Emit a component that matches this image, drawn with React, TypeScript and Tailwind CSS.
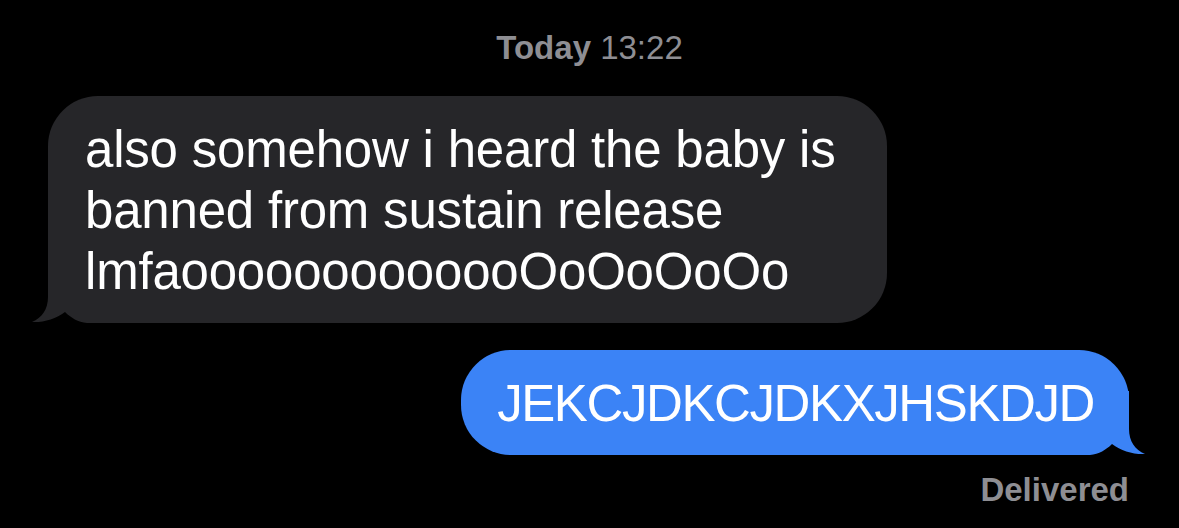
import React from "react";

function Tail({ side, color }: { side: "left" | "right"; color: string }) {
  // little hook at the bottom corner of a bubble
  const d =
    side === "left"
      ? "M16 0 L16 38 C16 50 10 59 0 63 C12 63.5 24 60 33 53 C39 59 46 63 55 64 L80 64 L80 0 Z"
      : "M64 0 L64 38 C64 50 70 59 80 63 C68 63.5 56 60 47 53 C41 59 34 63 25 64 L0 64 L0 0 Z";
  return (
    <svg
      width="80"
      height="64"
      viewBox="0 0 80 64"
      className={
        side === "left"
          ? "absolute bottom-0 -left-[16px]"
          : "absolute bottom-0 -right-[16px]"
      }
    >
      <path d={d} fill={color} />
    </svg>
  );
}

export default function App() {
  return (
    <div
      className="min-h-[528px] w-full bg-black text-white"
      style={{ fontFamily: "'Liberation Sans', Arial, sans-serif" }}
    >
      {/* Timestamp */}
      <div className="pt-[28px] text-center text-[33px] leading-[40px] text-[#8e8e93]">
        <span className="font-semibold">Today</span> 13:22
      </div>

      {/* Incoming message */}
      <div className="mt-[28px] pl-[48px]">
        <div className="relative w-[839px] rounded-[50px] bg-[#262629] pl-[37px] pr-[30px] pt-[23px] pb-[21px]">
          <Tail side="left" color="#262629" />
          <p className="relative text-[51px] leading-[61px] tracking-[-0.2px]">
            also somehow i heard the baby is
            <br />
            banned from sustain release
            <br />
            lmfaooooooooooooOoOoOoOo
          </p>
        </div>
      </div>

      {/* Outgoing message */}
      <div className="mt-[27px] flex justify-end pr-[50px]">
        <div className="relative rounded-[50px] bg-[#3b83f6] pl-[36px] pr-[35px] pt-[23px] pb-[21px]">
          <Tail side="right" color="#3b83f6" />
          <p className="relative text-[51px] leading-[61px] tracking-[-1.4px]">
            JEKCJDKCJDKXJHSKDJD
          </p>
        </div>
      </div>

      {/* Status */}
      <div className="mt-[15px] pr-[50px] text-right text-[33px] font-semibold leading-[40px] text-[#8e8e93]">
        Delivered
      </div>
    </div>
  );
}
